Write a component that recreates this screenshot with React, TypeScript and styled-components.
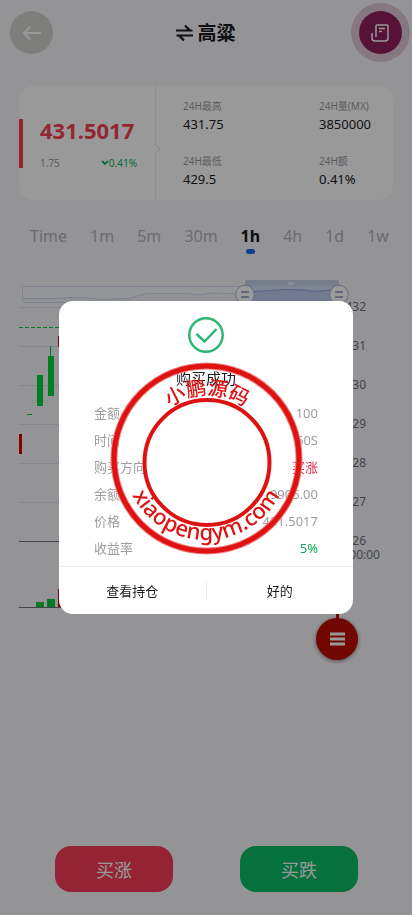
import React from 'react';
import styled, { createGlobalStyle } from 'styled-components';

const GlobalStyle = createGlobalStyle`
  * { box-sizing: border-box; }
  body {
    margin: 0;
    background: #f7f7fa;
    color: #1b1b1f;
    font-family: "Noto Sans", "Noto Sans CJK SC", sans-serif;
  }
  button { font-family: inherit; border: 0; padding: 0; cursor: pointer; }
`;

const Page = styled.div`
  min-height: 100vh;
  display: flex;
  flex-direction: column;
`;

const Header = styled.header`
  display: flex;
  align-items: center;
  justify-content: space-between;
  height: 65px;
  padding: 0 10px;
`;

const RoundButton = styled.button<{ $tone: string; $halo?: string }>`
  display: flex;
  align-items: center;
  justify-content: center;
  width: 43px;
  height: 43px;
  border-radius: 50%;
  color: #fff;
  background: ${(p) => p.$tone};
  box-shadow: ${(p) => (p.$halo ? `0 0 0 8px ${p.$halo}` : 'none')};
`;

const Title = styled.h1`
  display: flex;
  align-items: center;
  gap: 4px;
  margin: 0;
  font-size: 19px;
  line-height: 28px;
  font-weight: 700;
`;

const Card = styled.section`
  display: flex;
  margin: 21px 19px 0;
  height: 114px;
  border-radius: 15px;
  background: #fff;
`;

const PricePane = styled.div`
  position: relative;
  display: flex;
  flex-direction: column;
  justify-content: center;
  gap: 10px;
  width: 137px;
  padding: 0 18px 0 17px;
  border-right: 1px solid #ebebee;
  &::before {
    content: "";
    position: absolute;
    left: 0;
    top: 33px;
    width: 4px;
    height: 49px;
    background: #f63f57;
  }
  &::after {
    content: "";
    position: absolute;
    right: -4px;
    top: 59px;
    width: 7px;
    height: 7px;
    transform: rotate(45deg);
    background: #fff;
    border-top: 1px solid #ebebee;
    border-right: 1px solid #ebebee;
  }
`;

const Price = styled.div`
  padding-left: 4px;
  font-size: 22px;
  line-height: 30px;
  font-weight: 700;
  color: #f63f57;
`;

const Change = styled.div`
  display: flex;
  justify-content: space-between;
  padding-left: 4px;
  font-size: 10px;
  line-height: 16px;
  color: #9b9ba3;
`;

const Down = styled.span`
  display: flex;
  align-items: center;
  color: #08b865;
`;

const Stats = styled.dl`
  flex: 1;
  display: grid;
  grid-template-columns: 136px 1fr;
  grid-template-rows: 37px 37px;
  row-gap: 18px;
  margin: 0;
  padding: 11px 0 0 27px;
`;

const Stat = styled.div`
  dt { font-size: 10px; line-height: 18px; color: #9b9ba3; }
  dd { margin: 0; font-size: 13px; line-height: 18px; }
`;

const Tabs = styled.nav`
  display: flex;
  justify-content: center;
  gap: 23px;
  margin: 24px 0 0 7px;
`;

const Tab = styled.button<{ $active?: boolean }>`
  display: flex;
  flex-direction: column;
  align-items: center;
  gap: 1px;
  background: none;
  font-size: 16px;
  line-height: 24px;
  font-weight: ${(p) => (p.$active ? 700 : 400)};
  color: ${(p) => (p.$active ? '#17171c' : '#b2b2ba')};
  &::after {
    content: "";
    width: 9px;
    height: 5px;
    border-radius: 3px;
    background: ${(p) => (p.$active ? '#1468f5' : 'transparent')};
  }
`;

const Chart = styled.svg`
  display: block;
  flex: none;
  width: 412px;
  height: 340px;
  margin-top: 26px;
  font-size: 12px;
`;

const Actions = styled.footer`
  display: flex;
  justify-content: space-between;
  margin-top: auto;
  padding: 0 54px 23px 55px;
`;

const TradeButton = styled.button<{ $tone: string }>`
  width: 118px;
  height: 46px;
  border-radius: 16px;
  color: #fff;
  font-size: 18px;
  background: ${(p) => p.$tone};
`;

const MenuButton = styled.button`
  position: fixed;
  right: 54px;
  top: 618px;
  display: flex;
  align-items: center;
  justify-content: center;
  width: 42px;
  height: 42px;
  border-radius: 50%;
  background: #bd0c00;
  box-shadow: 0 1px 4px rgba(0, 0, 0, 0.5);
  &::before {
    content: "";
    position: absolute;
    top: -4px;
    width: 3px;
    height: 5px;
    background: #bd0c00;
  }
`;

const Overlay = styled.div`
  position: fixed;
  inset: 0;
  display: grid;
  place-items: center;
  background: rgba(0, 0, 0, 0.4);
  & > * { grid-area: 1 / 1; }
`;

const Dialog = styled.section`
  display: flex;
  flex-direction: column;
  align-items: center;
  width: 294px;
  padding-top: 16px;
  border-radius: 14px;
  background: #fff;
`;

const DialogTitle = styled.h2`
  margin: 13px 0 8px;
  font-size: 15px;
  line-height: 24px;
  font-weight: 400;
`;

const Details = styled.dl`
  align-self: stretch;
  margin: 0;
  padding: 2px 35px 4px;
`;

const Detail = styled.div<{ $tone?: string }>`
  display: flex;
  justify-content: space-between;
  font-size: 13px;
  line-height: 27px;
  color: #9e9e9e;
  dd { margin: 0; color: ${(p) => p.$tone || 'inherit'}; }
`;

const DialogFooter = styled.div`
  align-self: stretch;
  display: grid;
  grid-template-columns: 1fr 1px 1fr;
  align-items: center;
  border-top: 1px solid #e9e9ec;
`;

const DialogButton = styled.button`
  height: 47px;
  background: none;
  font-size: 13px;
  color: #1b1b1f;
`;

const Divider = styled.span`
  height: 19px;
  background: #ececf0;
`;

const Stamp = styled.svg`
  pointer-events: none;
  font-weight: 500;
`;

const stats = [
  ['24H最高', '431.75'],
  ['24H量(MX)', '3850000'],
  ['24H最低', '429.5'],
  ['24H额', '0.41%'],
];
const tabs = ['Time', '1m', '5m', '30m', '1h', '4h', '1d', '1w'];
const details = [
  ['金额', '100'],
  ['时间', '60S'],
  ['购买方向', '买涨', '#dc2f50'],
  ['余额', '9905.00'],
  ['价格', '431.5017'],
  ['收益率', '5%', '#0fa958'],
];
const levels = ['432', '431', '430', '429', '428', '427', '426'];

function Handle({ x }: { x: number }) {
  return (
    <g>
      <circle cx={x} cy="14.5" r="9.3" fill="#fff" stroke="#aab4cc" />
      <path d={`M${x - 4} 12h8M${x - 4} 17h8`} stroke="#a4b1cf" strokeWidth="2" />
    </g>
  );
}

function PriceChart() {
  return (
    <Chart viewBox="0 0 412 340" role="img" aria-label="1h">
      <rect x="22.5" y="6.5" width="317" height="16" rx="1" fill="#f7f8fb" stroke="#d2dbee" />
      <path
        d="M23 18.5h32l16-1 18 .5 14 1.5 18-1 8 .5 8-3 10-2.5h40l10 1.5 16-2 26 1V22H23Z"
        fill="#f1f3f9"
      />
      <path
        d="M23 18.5h32l16-1 18 .5 14 1.5 18-1 8 .5 8-3 10-2.5h40l10 1.5 16-2 26 1"
        fill="none" stroke="#d0d8ea"
      />
      <rect x="245" y="0" width="94" height="6" rx="1" fill="#c9d3ec" />
      <rect x="245" y="6" width="94" height="17" fill="#d1dcf4" />
      <path d="M245 12l18-1 22-1.500 20 .5 10 1.500 20-2 4 .5V23h-94Z" fill="#bccbed" />
      <path d="M245 12l18-1 22-1.500 20 .5 10 1.500 20-2 4 .5" fill="none" stroke="#88a7e8" />
      <path d="M289 2v3M291 2v3M293 2v3" stroke="#fff" />
      <Handle x={245} />
      <Handle x={339} />
      {levels.map((level, i) => (
        <g key={level}>
          <path
            d={`M19 ${27.5 + i * 39}h321`}
            stroke={i === 6 ? '#6e7079' : '#dfe3ef'}
          />
          <text x="366" y={31 + i * 39} textAnchor="end" fill="#6e7079">{level}</text>
        </g>
      ))}
      <text x="380" y="279" textAnchor="end" fill="#6e7079">00:00</text>
      <path d="M19 47.500h321" stroke="#00cf3c" strokeDasharray="4 2" />
      <path d="M19 327.500h321" stroke="#6e7079" />
      <g fill="#00cf3c">
        <path d="M37 95h6v31h-6ZM48 76h6v40h-6ZM50 66h1v10h-1ZM27 134h5v1h-5ZM36 322h8v5h-8ZM47 319h8v8h-8Z" />
      </g>
      <g fill="#d50000">
        <path d="M19 154h3v20h-3ZM58 56h6v11h-6ZM58 309h7v18h-7Z" />
      </g>
    </Chart>
  );
}

function CompanyStamp() {
  return (
    <Stamp width="194" height="194" viewBox="0 0 194 194">
      <defs>
        <path id="arcTop" d="M34 98a64 64 0 0 1 128 0" />
        <path id="arcBottom" d="M14 96a83 83 0 0 0 166 0" />
      </defs>
      <circle cx="97.500" cy="97.500" r="92.500" fill="none" stroke="#f08080" strokeWidth="7" />
      <circle cx="97.500" cy="97.500" r="92.500" fill="none" stroke="#df1212" strokeWidth="5" />
      <circle cx="98" cy="101.500" r="62.500" fill="none" stroke="#df1212" strokeWidth="4" />
      <g fill="#df1212" textAnchor="middle">
        <text fontSize="20"><textPath href="#arcTop" startOffset="50%">小鹏源码</textPath></text>
        <text fontSize="22"><textPath href="#arcBottom" startOffset="50%">xiaopengym.com</textPath></text>
      </g>
    </Stamp>
  );
}

export default function App() {
  return (
    <>
      <GlobalStyle />
      <Page>
        <Header>
          <RoundButton $tone="#d2d2d0" aria-label="返回">
            <svg width="20" height="16" viewBox="0 0 20 16" fill="none" stroke="currentColor" strokeWidth="2">
              <path d="M19 8H2M8.500 1.500 2 8l6.500 6.500" />
            </svg>
          </RoundButton>
          <Title>
            <svg width="17" height="18" viewBox="0 0 17 18" fill="none" stroke="currentColor" strokeWidth="2.200">
              <path d="M0 6.500h16.500M9 1.500l5 5M17 11.500H.5M8 16.500l-5-5" />
            </svg>
            高粱
          </Title>
          <RoundButton $tone="#8f1f5c" $halo="#dfc9d8" aria-label="订单">
            <svg width="18" height="18" viewBox="0 0 18 18" fill="none" stroke="currentColor" strokeWidth="1.500" strokeLinejoin="round">
              <path d="M5 13V2q0-1 1-1h10q1 0 1 1v12q0 3-3 3H4q-3 0-3-3V9M8 4.500h6M8 7.500h3" />
            </svg>
          </RoundButton>
        </Header>

        <Card>
          <PricePane>
            <Price>431.5017</Price>
            <Change>
              <span>1.75</span>
              <Down>
                <svg width="8" height="6" viewBox="0 0 8 6" fill="none" stroke="currentColor" strokeWidth="1.800">
                  <path d="M1 1l3 3 3-3" />
                </svg>
                0.41%
              </Down>
            </Change>
          </PricePane>
          <Stats>
            {stats.map(([label, value]) => (
              <Stat key={label}><dt>{label}</dt><dd>{value}</dd></Stat>
            ))}
          </Stats>
        </Card>

        <Tabs>
          {tabs.map((t) => <Tab key={t} $active={t === '1h'}>{t}</Tab>)}
        </Tabs>

        <PriceChart />

        <Actions>
          <TradeButton $tone="#f73d56">买涨</TradeButton>
          <TradeButton $tone="#0abd64">买跌</TradeButton>
        </Actions>
      </Page>

      <MenuButton aria-label="菜单">
        <svg width="15" height="14" viewBox="0 0 15 14" stroke="#fff" strokeWidth="3">
          <path d="M0 2h15M0 7h15M0 12h15" />
        </svg>
      </MenuButton>

      <Overlay>
        <Dialog role="dialog" aria-labelledby="result">
          <svg width="36" height="36" viewBox="0 0 36 36" fill="none" stroke="#2fb574" strokeWidth="2.500">
            <circle cx="18" cy="18" r="16.700" />
            <path d="M8.500 17l8 7.500L28.500 12" />
          </svg>
          <DialogTitle id="result">购买成功</DialogTitle>
          <Details>
            {details.map(([label, value, tone]) => (
              <Detail key={label} $tone={tone}><dt>{label}</dt><dd>{value}</dd></Detail>
            ))}
          </Details>
          <DialogFooter>
            <DialogButton>查看持仓</DialogButton>
            <Divider />
            <DialogButton>好的</DialogButton>
          </DialogFooter>
        </Dialog>
        <CompanyStamp />
      </Overlay>
    </>
  );
}
